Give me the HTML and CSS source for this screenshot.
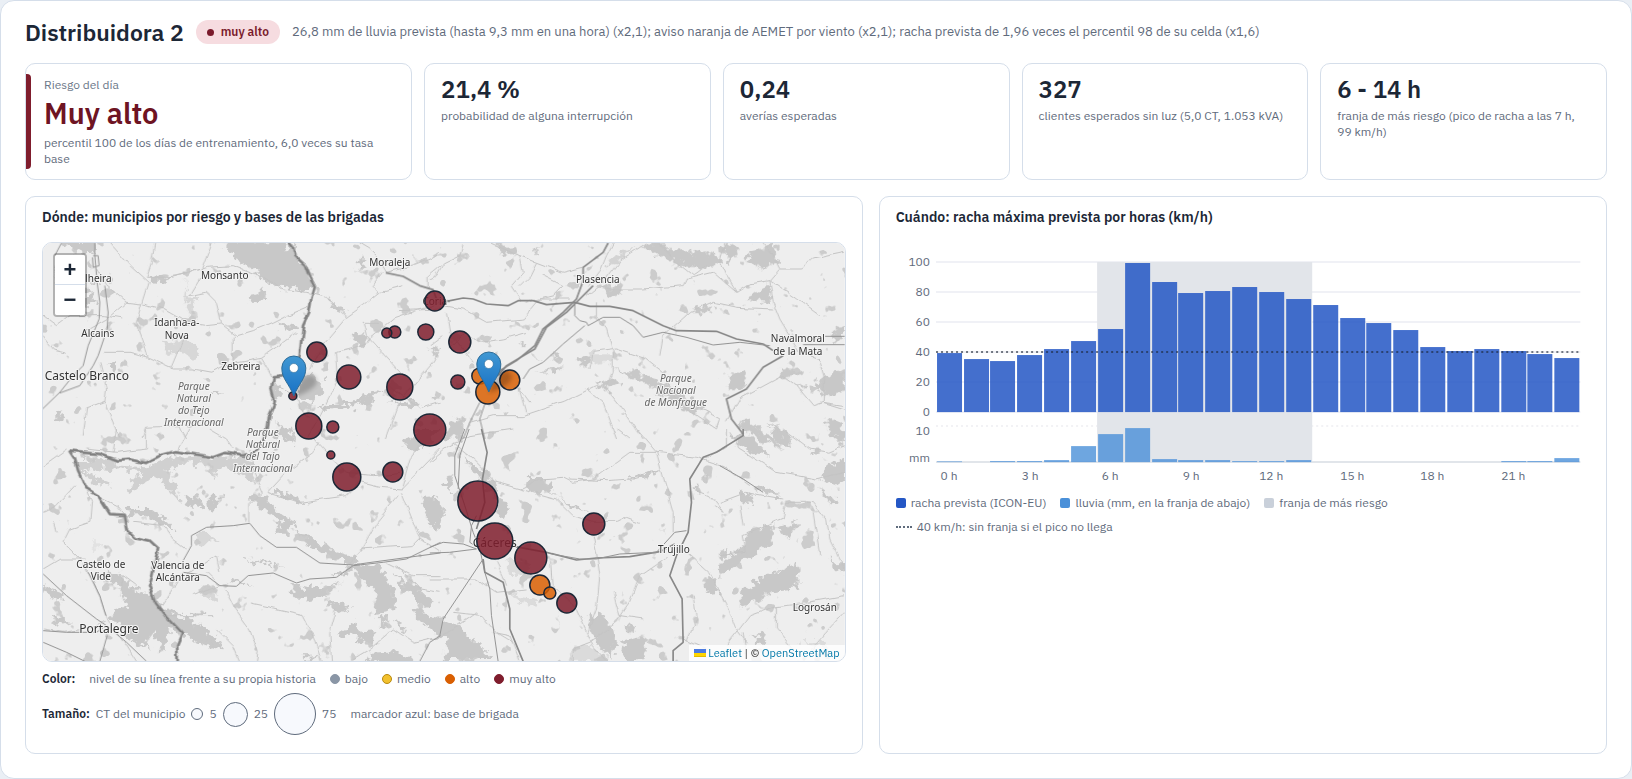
FILE: index.html
```html
<!DOCTYPE html>
<html lang="es">
<head>
<meta charset="utf-8">
<meta name="viewport" content="width=device-width, initial-scale=1">
<title>Distribuidora 2</title>
<link rel="stylesheet" href="styles.css">
</head>
<body>
<main class="sheet">
  <header class="head">
    <h1 class="title">Distribuidora 2</h1>
    <span class="pill"><i class="pill-dot"></i>muy alto</span>
    <p class="reason">26,8 mm de lluvia prevista (hasta 9,3 mm en una hora) (x2,1); aviso naranja de AEMET por viento (x2,1); racha prevista de 1,96 veces el percentil 98 de su celda (x1,6)</p>
  </header>

  <section class="kpis">
    <article class="kpi kpi-main">
      <p class="kpi-over">Riesgo del día</p>
      <p class="kpi-level">Muy alto</p>
      <p class="kpi-label">percentil 100 de los días de entrenamiento, 6,0 veces su tasa base</p>
    </article>
    <article class="kpi"><p class="kpi-value">21,4 %</p><p class="kpi-label">probabilidad de alguna interrupción</p></article>
    <article class="kpi"><p class="kpi-value">0,24</p><p class="kpi-label">averías esperadas</p></article>
    <article class="kpi"><p class="kpi-value">327</p><p class="kpi-label">clientes esperados sin luz (5,0 CT, 1.053 kVA)</p></article>
    <article class="kpi"><p class="kpi-value">6 - 14 h</p><p class="kpi-label">franja de más riesgo (pico de racha a las 7 h, 99 km/h)</p></article>
  </section>

  <section class="panels">
    <article class="panel">
      <h2 class="panel-title">Dónde: municipios por riesgo y bases de las brigadas</h2>
      <div class="map">
        <svg class="map-svg" viewBox="43 244 802 418" preserveAspectRatio="xMidYMid slice" role="img" aria-label="Mapa de municipios">
          <defs>
            <filter id="rough" x="-5%" y="-5%" width="110%" height="110%">
              <feTurbulence type="fractalNoise" baseFrequency="0.12" numOctaves="3" seed="4"/>
              <feDisplacementMap in="SourceGraphic" scale="15" xChannelSelector="R" yChannelSelector="G"/>
            </filter>
            <filter id="wiggle" x="-5%" y="-5%" width="110%" height="110%">
              <feTurbulence type="fractalNoise" baseFrequency="0.07" numOctaves="2" seed="9"/>
              <feDisplacementMap in="SourceGraphic" scale="6" xChannelSelector="R" yChannelSelector="G"/>
            </filter>
            <filter id="speckle" x="0" y="0" width="100%" height="100%" color-interpolation-filters="sRGB">
              <feTurbulence type="fractalNoise" baseFrequency="0.06" numOctaves="3" seed="21"/>
              <feColorMatrix values="0 0 0 0 .8  0 0 0 0 .8  0 0 0 0 .8  18 0 0 0 -12.2"/>
            </filter>
            <filter id="soft" x="-50%" y="-50%" width="200%" height="200%"><feGaussianBlur stdDeviation="2"/></filter>
            <linearGradient id="pinFill" x1="0" y1="0" x2="0" y2="1"><stop offset="0" stop-color="#4198d3"/><stop offset="1" stop-color="#1871c5"/></linearGradient>
            <g id="pin">
              <path d="M0-1C5-14 12-18 12-29A12 12 0 0 0-12-29C-12-18-5-14 0-1Z" fill="url(#pinFill)" stroke="#2e6c97" stroke-width="1"/>
              <circle cy="-29" r="4.5" fill="#fff" stroke="#2e6c97" stroke-width=".6"/>
            </g>
            <path id="pinShade" d="M0 0C3-10 6-17 12-21C20-25 27-17 20-10C14-5 6-2 0 0Z" fill="#000" opacity=".22" filter="url(#soft)"/>
          </defs>
          <rect x="43" y="244" width="802" height="418" fill="#eee"/>
          <rect x="43" y="244" width="802" height="418" filter="url(#speckle)"/>

          <g class="wood" filter="url(#rough)">
            <g transform="translate(20 190) scale(.3333)">
              <path d="M640 160H800L830 205 855 228 885 295 850 305 790 300 740 280 700 245 660 220 640 190 610 175Z"/>
              <path d="M125 155H220L225 195 190 190 150 180Z"/><path d="M685 335 705 310 735 312 740 330 700 345Z"/>
              <path d="M925 320 945 350 975 355 970 375 935 365Z"/><path d="M995 435 1025 430 1050 465 1030 475 1000 455Z"/>
              <path d="M195 310 215 300 225 350 195 345Z"/><path d="M200 280 250 260 240 275Z"/><path d="M265 520 290 520 285 545 270 542Z"/>
              <path d="M490 270 505 300 500 350 515 385 530 390 520 345 540 330 515 330Z" opacity=".6"/>
              <path d="M425 460 480 450 500 465 540 480 520 510 490 490 440 495Z" opacity=".6"/>
              <path d="M395 265 450 270 440 285 400 280Z"/><path d="M770 400 830 415 800 425Z"/>
              <path d="M835 575 870 555 910 570 905 610 870 640 840 625Z"/><path d="M760 570 780 600 770 640 755 640Z"/>
              <path d="M885 665 930 645 990 645 1060 610 1090 605 1060 630 1000 655 920 665Z"/>
              <path d="M1095 645 1140 640 1180 635 1200 645 1150 652Z"/><path d="M770 700 810 720 820 760 770 740Z"/>
              <path d="M575 610 600 605 605 625Z"/><path d="M100 680 130 670 120 690Z"/><path d="M1010 240 1040 220 1030 200Z"/>
            </g>
            <g transform="translate(430 190) scale(.3333)">
              <path d="M630 165 700 162 730 190 780 180 820 200 850 190 880 215 830 240 760 235 740 210 670 200Z"/>
              <path d="M870 175 900 160 930 180 900 220Z"/><path d="M960 190 1030 165 1045 220 1000 240 950 210Z"/>
              <path d="M205 172 260 168 265 190 215 195Z"/><path d="M300 185 330 180 325 192Z"/><path d="M510 290 560 290 575 310 535 318Z"/>
              <path d="M945 340 980 310 1015 280 1025 310 1030 350 985 335Z"/><path d="M785 365 830 345 840 360 860 350 850 365 800 375Z"/>
              <path d="M550 540 620 550 680 575 760 620 830 650 790 670 740 650 710 620 620 570Z"/>
              <path d="M480 490 545 490 550 520 490 525Z" opacity=".5"/><path d="M445 510 485 500 475 525 450 530Z"/>
              <path d="M500 580 550 565 575 580 545 600 510 600Z"/><path d="M310 545 400 535 375 550Z"/>
              <path d="M890 580 930 545 955 560 940 600 895 600Z"/><path d="M1045 545 1110 540 1120 560 1060 565Z"/><path d="M1095 590 1130 585 1120 600Z"/>
              <path d="M1155 580 1200 560 1245 540V610L1190 620Z"/><path d="M1205 430 1245 415V450L1210 450Z"/>
              <path d="M925 700 960 690 990 730 1040 745 1060 780 1000 760Z"/><path d="M1180 700 1240 690V770L1210 740Z"/>
              <path d="M1015 700 1060 720 1090 760 1060 750Z"/><path d="M60 700 100 680 95 750H40Z"/><path d="M540 210 620 165 570 215 530 240Z" opacity=".7"/>
              <path d="M265 460 290 460 280 475Z"/><path d="M360 500 395 500 385 515Z"/><path d="M0 470 30 490 10 500Z"/><path d="M0 615 30 625 10 635Z"/>
            </g>
            <g transform="translate(20 430) scale(.3333)">
              <path d="M165 90 230 90 300 110 380 115 440 90 520 80 600 85 690 75 710 120 700 160 650 130 600 115 575 150 555 100 480 105 440 130 470 180 480 220 440 170 400 140 340 190 320 175 370 130 290 120 240 115 195 130 280 165 270 180 220 160 170 120Z" opacity=".8"/>
              <path d="M500 205 530 195 545 230 515 240Z"/><path d="M560 210 610 205 600 240 565 245Z"/><path d="M680 210 740 190 760 230 790 260 820 280 800 320 760 320 790 290 750 250 700 220Z"/>
              <path d="M745 185 800 190 860 220 810 215Z"/><path d="M820 300 880 330 960 370 1010 385 1000 405 940 390 870 350Z"/>
              <path d="M320 240 400 240 440 270 470 300 440 300 380 260 325 265Z"/>
              <path d="M1210 205 1240 200 1262 225V300L1230 280 1210 240Z"/><path d="M1150 30 1200 0 1262 0 1220 50 1180 70Z"/>
              <path d="M260 430 310 445 340 480 395 500 440 545 520 580 600 640 615 665 560 650 490 620 455 600 430 670 400 600 370 640 400 665 340 640 290 580 270 555 320 530 300 480Z"/>
              <path d="M535 580 580 620 600 655 560 640Z"/><path d="M805 465 860 480 940 470 965 460 920 500 830 510Z"/>
              <path d="M930 440 1000 405 1080 415 1120 490 1125 540 1060 550 1070 490 1010 430Z"/><path d="M1125 440 1180 470 1240 520 1220 535 1160 490Z"/>
              <path d="M925 520 990 535 980 545 930 535Z"/><path d="M955 610 1010 580 1030 610 1080 605 1060 640 1000 630Z"/><path d="M1080 550 1110 580 1080 590Z"/>
              <path d="M1180 540 1260 570V600L1200 580Z"/><path d="M1120 570 1170 600 1150 610Z"/><path d="M620 455 650 450 690 470 640 462Z"/><path d="M520 320 560 310 600 340 530 340Z" opacity=".6"/>
              <path d="M845 685 900 680 880 697H850Z"/><path d="M1050 675 1130 670 1190 697H1040Z"/><path d="M70 470 130 490 120 515 70 490Z"/><path d="M90 570 160 575 110 590Z"/>
              <path d="M540 470 600 485 590 520 550 500Z" opacity=".6"/><path d="M670 385 720 395 790 420 720 405Z"/><path d="M500 550 560 545 540 560Z"/><path d="M220 330 240 350 225 370Z" opacity=".3"/>
            </g>
            <g transform="translate(430 430) scale(.3333)">
              <path d="M0 200 35 220 45 260 20 300 0 290Z"/><path d="M40 170 70 130 65 190Z"/><path d="M100 80 180 140 200 190 240 240 215 270 190 210 140 140Z"/>
              <path d="M280 150 340 150 370 190 320 200Z"/><path d="M380 200 440 230 470 250 430 240Z"/><path d="M300 180 400 190 300 190Z"/><path d="M595 160 640 130 690 125 650 145Z"/>
              <path d="M0 560 50 570 120 620 190 690H40L60 640 0 600Z"/><path d="M475 550 520 560 560 620 550 690 510 660 480 600Z"/><path d="M570 640 655 615 640 697H590Z"/>
              <path d="M585 590 620 585 600 620Z"/><path d="M960 310 1010 285 1035 290 1020 340 970 380 930 400 870 440 860 420 920 370Z"/><path d="M870 370 900 350 880 400Z"/>
              <path d="M940 480 1010 440 1100 400 1108 480 1020 490 980 520 930 535Z"/><path d="M825 445 860 445 870 490 830 495Z"/><path d="M1040 300 1105 280 1080 330Z"/>
              <path d="M930 180 975 210 970 235 930 220Z"/><path d="M795 160 815 190 800 200Z"/><path d="M820 145 835 140 830 165Z"/><path d="M900 20 960 20 1000 60 1030 80 960 70Z"/>
              <path d="M1020 0 1060 10 1090 50 1060 50Z"/><path d="M975 170 1060 195 1040 205 980 185Z"/><path d="M1140 65 1165 60 1155 80Z"/>
              <path d="M1165 140 1215 100 1245 90V150L1210 180Z"/><path d="M1170 170 1225 220 1205 230Z"/><path d="M1200 380 1245 410V440L1210 410Z"/><path d="M960 630 1000 610 1010 640Z"/>
              <path d="M690 310 705 290 710 320Z" opacity=".4"/><path d="M430 650 480 650 540 690 420 697Z" opacity=".5"/><path d="M235 495 330 515 300 530Z" opacity=".5"/><path d="M1110 640 1200 640 1190 660Z" opacity=".5"/><path d="M230 390 300 400 290 440 240 430Z" opacity=".5"/>
            </g>
          </g>

          <g class="lane" filter="url(#wiggle)">
            <g transform="translate(20 190) scale(.3333)">
              <path d="M270 162 330 230 385 280 365 345 320 340 260 290 230 240M405 162 395 220 380 265 430 265 500 255 560 235 640 230 720 260 790 300 860 310 920 325 980 385M575 162 545 240 450 265M370 345 430 360 500 400 560 410 605 405 650 440 700 425 760 400 800 380 870 350M365 345 350 400 375 470 385 505 330 490 250 490M385 505 460 540 520 540 575 550 640 520 725 505 790 460 830 430M605 405 600 380 590 340 560 310 510 320 540 270"/>
              <path d="M455 540 480 480 500 430M725 505 740 530 770 590 830 620 840 660 870 680M640 520 640 440M70 380 110 410 150 380 250 380 310 390M70 440 100 480 140 490M120 200 100 260 110 290M240 520 260 600 255 640 200 660 190 740M255 640 300 750M320 340 260 390 190 430M0 570 70 560M500 750 480 710 380 715 370 750"/>
              <path d="M1090 250 1060 290 1080 310 1030 350 980 385 900 480 870 540M1100 250 1070 200 1050 180 1020 162M1100 250 1180 230 1230 210 1260 190M1225 300 1225 260 1262 230M1070 310 1150 290M1135 365 1262 360M1080 400 1030 400 1040 440 1150 560M950 490 990 480 1040 460 1120 390 1262 340M950 490 955 560 930 620 900 680 860 750M1262 640 1200 660 1100 580M1262 480 1240 520 1140 640 1100 750"/>
            </g>
            <g transform="translate(430 190) scale(.3333)">
              <path d="M100 162 90 200 40 225 20 260 0 270M185 162 270 200 320 220 400 250 460 235M270 200 280 250 245 290 275 335M320 220 300 260 270 290M340 260 400 290 370 320 290 340M550 162 530 200 510 250 480 290M650 162 570 215 520 280 470 320M885 162 870 220 890 260 920 310 960 285 1020 275 1050 240 1120 240 1150 210 1245 190M1000 162 1030 200 1050 240M690 162 740 220 790 260 830 230M500 290 560 300 640 300 760 290 770 270 850 250 920 310M1020 275 1030 340 1050 390 1080 440 1110 490 1170 510 1185 560 1180 640 1245 650M1020 275 1100 330 1170 380"/>
              <path d="M500 340 500 380 530 420 550 490 550 550 530 600 570 650 640 750M40 350 100 360 170 400 280 390 330 330 420 330M50 370 60 430 130 520M60 480 110 430 150 460 220 450 290 430M480 540 490 490 560 480 650 510 700 550 740 640 860 720 870 690 780 640M690 500 700 440 780 370 850 340 920 355 1030 360M0 470 40 440M300 640 270 600 290 670M120 700 190 680 280 680 400 640 500 590M470 600 520 640 560 750M1245 660 1180 640 1150 650 1100 590 1060 560 1040 570 930 630 890 700"/>
            </g>
            <g transform="translate(20 430) scale(.3333)">
              <path d="M70 250 110 230 165 170M200 178 215 220 210 280 150 300 130 340 190 400 200 430M200 60 290 70 380 60 380 0M290 0 280 70M470 70 510 0M640 60 620 30 570 0M730 190 690 230 690 280M730 190 700 120 690 60M745 190 800 130 880 70 900 40M885 30 940 90 980 130 1060 140 1140 130M1020 160 1080 175 1145 180 1170 90 1200 50M745 190 840 220 910 210 980 200 1020 160M1145 180 1262 60M1145 190 1200 330 1260 370M1135 200 1070 280 1020 370 980 420M1020 360 1180 350 1200 330M500 360 460 330 430 290 340 280M315 260 290 230 210 190M70 420 120 390 200 390"/>
              <path d="M490 430 460 480 430 525 400 520M70 600 130 610 200 600 260 580M200 420 240 500 265 570 320 650 350 697M615 480 640 530 690 600 715 670 710 697M690 525 760 540 850 560 880 620 905 697M950 540 930 610 935 697M1100 400 1180 440 1262 440M1262 490 1200 480 1130 410M1262 620 1180 640 1120 600 1050 660 1000 690M500 440 590 380 600 430M300 500 310 440 350 470M520 500 600 470 560 430M590 600 640 650 660 697M70 110 140 60M100 280 110 310M440 560 580 560"/>
            </g>
            <g transform="translate(430 430) scale(.3333)">
              <path d="M0 100 60 50 120 20 250 0M70 40 130 90 200 160 270 180 330 150 400 145 430 160 490 150 600 70 680 70 800 85 880 110 960 170M420 150 530 155 600 150 690 125M620 0 680 70 730 250 730 310M270 180 380 210 430 260 490 280 560 280 590 265 630 280M490 320 500 370 510 440 500 540 470 620M710 385 630 440 600 520 560 580 480 640 430 660 430 697M780 375 840 430 890 520 920 600 950 640M890 650 960 560 1040 530 1130 520 1245 500M560 0 600 30M810 100 890 50 890 0M900 10 930 60 1040 130 1160 150 1245 130M1060 0 1140 60 1200 70 1245 50M1070 220 1060 270 940 320 950 370 870 380M1070 220 1150 220 1190 270 1200 330 1245 420M1150 250 1170 380"/>
              <path d="M0 450 140 450 200 490 290 480M365 400 370 470 440 540 490 650 530 697M0 630 40 620 140 550M190 610 240 620 270 697M70 550 160 560 200 610 250 640M790 180 840 200 880 250 850 230M870 220 950 190 1060 210M930 230 940 290M1040 530 1040 600 1090 660M1245 550 1200 600 1150 660M760 630 830 660M790 500 800 570 770 640M940 610 950 680M200 400 220 440 230 470M550 490 570 560 640 570"/>
            </g>
          </g>

          <g class="road">
            <g transform="translate(20 190) scale(.3333)">
              <path d="M225 162V200L232 280 240 340 238 390 205 470 190 530 160 560 120 610 68 660M255 290 265 370 262 420 235 500 220 530 180 590 120 612"/>
              <path class="road-major" d="M1098 251 1150 262 1200 290 1240 302 1250 330 1290 337"/>
              <path d="M125 162 105 200M220 200 235 200 238 230 220 235 218 205"/>
            </g>
            <g transform="translate(430 190) scale(.3333)">
              <path class="road-major" d="M535 162 520 190 460 235 460 275 440 330 400 370 340 420 315 470 260 515 210 545 190 570"/>
              <path class="road-major" d="M490 290 450 330 410 370 350 415 315 480 230 530 205 560M50 337 100 327 130 330 170 345 235 350 265 335 310 335 350 347 435 340 480 352 540 352 610 365 700 410 740 425 860 427 920 450 1000 465 1030 485M1060 500 1000 535 950 600 890 630 905 690 940 735"/>
              <path d="M435 345V380L450 395 470 400 475 410 520 385 570 385 610 410 640 445 700 430 770 445 850 468 930 460 1020 470M465 410 400 465 340 520 300 540 280 570M1120 467H1245M1185 442H1245M150 640 120 700 100 750M165 645 150 690 165 750"/>
            </g>
            <g transform="translate(20 430) scale(.3333)">
              <path d="M490 395 515 350 515 320 560 295 640 290 690 283 720 320 770 355 830 355 900 402 1000 408 1040 402 1262 372M490 430 560 440 600 470 650 472 685 440 760 432 830 462 870 450 950 445 1000 410 1090 400 1160 390 1262 340M70 435 140 500 230 570 260 590 320 640 380 697M205 430 240 500 258 560M262 620 240 697M70 605 140 610 230 610 258 590M70 640 140 670 195 697M1200 697 1230 640 1262 620"/>
            </g>
            <g transform="translate(430 430) scale(.3333)">
              <path d="M105 0 75 80 75 140 105 230 130 310 150 360 165 430 180 480 185 560 205 697M118 0 90 80 85 180M150 360 120 340 125 290 140 260M0 355 40 340 100 345 140 360M0 372 60 370 140 360"/>
              <path class="road-major" d="M155 0 172 70 158 150 165 220 140 300M160 390 165 430 220 460 240 540 240 600 280 697M240 350 350 370 440 393 500 387 600 383 690 368 735 345M940 0 940 20 860 70 820 85 780 150 785 220 775 310 740 380 720 440 757 510 760 640 730 665V697"/>
              <path d="M365 375 450 390 500 390 570 375 680 370 735 310 770 305M160 390 100 480 40 570 30 620M870 110 940 150 1000 190"/>
            </g>
          </g>

          <g class="frontier" filter="url(#wiggle)">
            <path id="frontier" transform="translate(20 190) scale(.3333)" d="M800 150 822 178 830 205 855 228 868 262 885 295 875 325 868 370 850 410 845 450 840 500 830 545 790 562 762 565 755 600 765 640 748 680 742 730 728 765 705 788 670 800 615 792 580 805 520 795 465 787 425 798 378 822 335 812 295 815 240 795 150 788 165 810 175 845 200 898 235 920 270 975 312 978 320 1020 345 1045 390 1055 415 1078 405 1120 395 1170 388 1190 405 1240 440 1285 487 1335 472 1370 474 1425"/>
            <use href="#frontier" class="frontier-core"/>
          </g>

          <g class="place">
            <text x="90" y="283">Soalheira</text><text x="225" y="280">Monsanto</text><text x="390" y="267">Moraleja</text>
            <text x="177" y="327">Idanha-a-</text><text x="177" y="340">Nova</text><text x="98" y="338">Alcains</text><text x="241" y="371">Zebreira</text>
            <text class="place-big" x="87" y="381">Castelo Branco</text><text x="598" y="284">Plasencia</text><text x="435" y="306">Coria</text>
            <text x="798" y="343">Navalmoral</text><text x="798" y="356">de la Mata</text>
            <text x="101" y="569">Castelo de</text><text x="101" y="581">Vide</text><text x="178" y="570">Valencia de</text><text x="178" y="582">Alcántara</text>
            <text class="place-big" x="109" y="634">Portalegre</text><text class="place-big" x="495" y="548">Cáceres</text><text x="674" y="554">Trujillo</text><text x="815" y="612">Logrosán</text>
            <g class="place-park">
              <text x="194" y="391">Parque</text><text x="194" y="403">Natural</text><text x="194" y="415">do Tejo</text><text x="194" y="427">Internacional</text>
              <text x="263" y="437">Parque</text><text x="263" y="449">Natural</text><text x="263" y="461">del Tajo</text><text x="263" y="473">Internacional</text>
              <text x="676" y="383">Parque</text><text x="676" y="395">Nacional</text><text x="676" y="407">de Monfrague</text>
            </g>
          </g>

          <g class="town">
            <circle cx="435" cy="302" r="10"/><circle cx="395" cy="333" r="6"/><circle cx="387" cy="334" r="5"/><circle cx="426" cy="333" r="8"/>
            <circle cx="317" cy="353" r="10"/><circle cx="349" cy="378" r="12"/><circle cx="400" cy="388" r="13"/><circle cx="293" cy="397" r="4"/>
            <circle cx="309" cy="427" r="13"/><circle cx="333" cy="428" r="6"/><circle cx="430" cy="431" r="16"/><circle cx="331" cy="456" r="4"/>
            <circle cx="347" cy="478" r="14"/><circle cx="393" cy="473" r="10"/><circle cx="460" cy="343" r="11"/><circle cx="458" cy="383" r="7"/>
            <circle cx="478" cy="502" r="20"/><circle cx="495" cy="542" r="18"/><circle cx="531" cy="559" r="16"/><circle cx="594" cy="525" r="11"/><circle cx="567" cy="604" r="10"/>
            <g class="town-high"><circle cx="480" cy="377" r="8"/><circle cx="510" cy="381" r="10"/><circle cx="488" cy="393" r="12"/><circle cx="540" cy="586" r="10"/><circle cx="550" cy="594" r="6"/></g>
          </g>
          <use href="#pinShade" x="294" y="398"/><use href="#pinShade" x="489" y="394"/>
          <use href="#pin" x="294" y="398"/><use href="#pin" x="489" y="394"/>
        </svg>
        <div class="zoom"><button type="button" aria-label="Acercar">+</button><button type="button" aria-label="Alejar">−</button></div>
        <div class="credit"><svg width="12" height="8" viewBox="0 0 12 8" aria-hidden="true"><path fill="#4c7be1" d="M0 0h12v4H0z"/><path fill="#ffd500" d="M0 4h12v3H0z"/><path fill="#e0bc00" d="M0 7h12v1H0z"/></svg> <a href="#leaflet">Leaflet</a> | © <a href="#osm">OpenStreetMap</a></div>
      </div>
      <div class="legend legend-color">
        <strong>Color:</strong><span>nivel de su línea frente a su propia historia</span>
        <span class="key"><i class="dot dot-low"></i>bajo</span><span class="key"><i class="dot dot-mid"></i>medio</span><span class="key"><i class="dot dot-high"></i>alto</span><span class="key"><i class="dot dot-top"></i>muy alto</span>
      </div>
      <div class="legend legend-size">
        <strong>Tamaño:</strong><span>CT del municipio</span><i class="ring ring-s"></i><span>5</span><i class="ring ring-m"></i><span>25</span><i class="ring ring-l"></i><span>75</span><span class="base-note">marcador azul: base de brigada</span>
      </div>
    </article>

    <article class="panel">
      <h2 class="panel-title">Cuándo: racha máxima prevista por horas (km/h)</h2>
      <svg class="chart" viewBox="0 0 694 245" role="img" aria-label="Racha y lluvia por horas">
        <path class="grid" d="M40 20H684M40 50H684M40 80H684M40 110H684M40 140H684M40 170H684"/>
        <path class="grid grid-dots" d="M40 184H684"/><path class="axis" d="M40 220H684"/>
        <rect class="band" x="201" y="20" width="215" height="200"/>
        <g class="gust">
          <rect x="41" y="111" width="25" height="59"/><rect x="68" y="117" width="25" height="53"/><rect x="94" y="119" width="25" height="51"/><rect x="121" y="113" width="25" height="57"/><rect x="148" y="107" width="25" height="63"/><rect x="175" y="99" width="25" height="71"/><rect x="202" y="87" width="25" height="83"/><rect x="229" y="21" width="25" height="149"/><rect x="256" y="40" width="25" height="130"/><rect x="282" y="51" width="25" height="119"/><rect x="309" y="49" width="25" height="121"/><rect x="336" y="45" width="25" height="125"/><rect x="363" y="50" width="25" height="120"/><rect x="390" y="57" width="25" height="113"/><rect x="417" y="63" width="25" height="107"/><rect x="444" y="76" width="25" height="94"/><rect x="470" y="81" width="25" height="89"/><rect x="497" y="88" width="25" height="82"/><rect x="524" y="105" width="25" height="65"/><rect x="551" y="109" width="25" height="61"/><rect x="578" y="107" width="25" height="63"/><rect x="605" y="109" width="25" height="61"/><rect x="631" y="112" width="25" height="58"/><rect x="658" y="116" width="25" height="54"/>
        </g>
        <g class="rain">
          <rect x="41" y="219.3" width="25" height=".7"/><rect x="94" y="219" width="25" height="1"/><rect x="121" y="219" width="25" height="1"/><rect x="148" y="218" width="25" height="2"/><rect x="175" y="204" width="25" height="16"/><rect x="202" y="192" width="25" height="28"/><rect x="229" y="186" width="25" height="34"/><rect x="256" y="217" width="25" height="3"/><rect x="282" y="218" width="25" height="2"/><rect x="309" y="218" width="25" height="2"/><rect x="336" y="219" width="25" height="1"/><rect x="363" y="219" width="25" height="1"/><rect x="390" y="218" width="25" height="2"/><rect x="605" y="219" width="25" height="1"/><rect x="631" y="219" width="25" height="1"/><rect x="658" y="216" width="25" height="4"/>
        </g>
        <path class="limit" d="M40 110H684"/>
        <g class="tick tick-y"><text x="34" y="24">100</text><text x="34" y="54">80</text><text x="34" y="84">60</text><text x="34" y="114">40</text><text x="34" y="144">20</text><text x="34" y="174">0</text><text x="34" y="193">10</text><text x="34" y="220">mm</text></g>
        <g class="tick"><text x="53" y="238">0 h</text><text x="134" y="238">3 h</text><text x="214" y="238">6 h</text><text x="295" y="238">9 h</text><text x="375" y="238">12 h</text><text x="456" y="238">15 h</text><text x="536" y="238">18 h</text><text x="617" y="238">21 h</text></g>
      </svg>
      <div class="legend legend-chart">
        <span class="key"><i class="swatch swatch-gust"></i>racha prevista (ICON-EU)</span><span class="key"><i class="swatch swatch-rain"></i>lluvia (mm, en la franja de abajo)</span><span class="key"><i class="swatch swatch-band"></i>franja de más riesgo</span><span class="key"><i class="dash"></i>40 km/h: sin franja si el pico no llega</span>
      </div>
    </article>
  </section>
</main>
</body>
</html>
```
FILE: styles.css
```css
* { box-sizing: border-box; }
body { margin: 0; background: #eaeff5; color: #1c2736; font: 12px/16px "IBM Plex Sans", Roboto, "Liberation Sans", sans-serif; }
h1, h2, p { margin: 0; }
.sheet { display: flex; flex-direction: column; gap: 16px; min-height: 100vh; padding: 16px 24px 24px; background: #fff; border: 1px solid #d5deea; border-radius: 14px; }
.head { display: flex; align-items: center; gap: 12px; min-height: 30px; }
.title { font-size: 23px; line-height: 30px; font-weight: 600; white-space: nowrap; }
.pill { display: flex; align-items: center; gap: 7px; height: 24px; padding: 0 11px; border-radius: 12px; background: #f6dce0; color: #7a1a2b; font-weight: 600; white-space: nowrap; }
.pill-dot { width: 7px; height: 7px; border-radius: 50%; background: #7a1a2b; }
.reason { color: #5f6b7c; font-size: 13px; line-height: 18px; }

.kpis { display: grid; grid-template-columns: 1.35fr repeat(4, 1fr); gap: 12px; }
.kpi { padding: 12px 16px; border: 1px solid #d5deea; border-radius: 10px; }
.kpi-main { position: relative; padding: 12px 18px; }
.kpi-main::before { content: ""; position: absolute; left: 0; top: 10px; bottom: 10px; width: 5px; border-radius: 0 4px 4px 0; background: #7f1d2d; }
.kpi-over { color: #6c7889; line-height: 18px; }
.kpi-level { margin: 1px 0 4px; color: #6e1423; font-size: 29px; line-height: 36px; font-weight: 600; }
.kpi-value { margin-bottom: 6px; font-size: 24px; line-height: 26px; font-weight: 600; }
.kpi-label { color: #5f6b7c; }

.panels { flex: 1; display: grid; grid-template-columns: 1.15fr 1fr; gap: 16px; }
.panel { padding: 12px 16px; border: 1px solid #d5deea; border-radius: 10px; min-width: 0; }
.panel-title { margin-bottom: 17px; font-size: 14px; line-height: 16px; font-weight: 600; }

.map { position: relative; height: 420px; overflow: hidden; border: 1px solid #d5deea; border-radius: 10px; }
.map-svg { display: block; width: 100%; height: 100%; }
.wood { fill: #c8c8c8; }
.lane { fill: none; stroke: #c4c4c4; stroke-width: 3; stroke-linejoin: round; }
.road { fill: none; stroke: #949494; stroke-width: 3; stroke-linejoin: round; }
.road-major { stroke: #888; stroke-width: 5; }
.frontier { fill: none; stroke: #a8a8a8; stroke-width: 10; stroke-linejoin: round; }
.frontier-core { stroke: #808080; stroke-width: 5; }
.place { font: 10px "Noto Sans", sans-serif; fill: #333; text-anchor: middle; stroke: #f4f4f4; stroke-width: 2px; paint-order: stroke; stroke-linejoin: round; }
.place-big { font-size: 12px; }
.place-park { font-style: italic; fill: #666; }
.town { fill: #7f1d2d; fill-opacity: .85; stroke: #1c2736; stroke-width: 1.5; }
.town-high { fill: #d95f02; }

.zoom { position: absolute; left: 10px; top: 10px; border: 2px solid rgba(0, 0, 0, .25); border-radius: 4px; background-clip: padding-box; }
.zoom button { display: block; width: 30px; height: 30px; padding: 0; border: 0; border-radius: 0 0 2px 2px; background: #fff; color: #1c2736; font: bold 22px/30px "Liberation Sans", sans-serif; }
.zoom button:first-child { border-bottom: 1px solid #d5deea; border-radius: 2px 2px 0 0; }
.credit { position: absolute; right: 0; bottom: 0; padding: 0 5px; background: rgba(255, 255, 255, .8); color: #333; font-size: 11px; }
.credit a { color: #0078a8; text-decoration: none; }

.legend { display: flex; flex-wrap: wrap; align-items: center; color: #5f6b7c; }
.legend strong { color: #1c2736; font-weight: 600; }
.legend-color { gap: 14px; margin-top: 8px; line-height: 18px; }
.key { display: flex; align-items: center; gap: 5px; }
.dot { width: 10px; height: 10px; border-radius: 50%; border: 1px solid; }
.dot-low { background: #8a96a6; border-color: #8a96a6; }
.dot-mid { background: #f2c12e; border-color: #b8890f; }
.dot-high { background: #d95f02; border-color: #d95f02; }
.dot-top { background: #7f1d2d; border-color: #7f1d2d; }
.legend-size { gap: 6px; margin-top: 5px; }
.ring { border: 1px solid #5f6b7c; border-radius: 50%; background: #f7f9fd; }
.ring-s { width: 12px; height: 12px; }
.ring-m { width: 25px; height: 25px; }
.ring-l { width: 42px; height: 42px; }
.base-note { margin-left: 8px; }

.chart { display: block; width: 100%; height: auto; }
.grid { fill: none; stroke: #f0f1f6; stroke-width: 2; }
.grid-dots { stroke-dasharray: 2 3; stroke: #f2f2f5; }
.axis { stroke: #e1e5ea; stroke-width: 2; }
.band { fill: #e2e5ea; }
.gust { fill: #2457c5; opacity: .85; }
.rain { fill: #4a90d9; opacity: .8; }
.limit { fill: none; stroke: #1c2736; stroke-opacity: .6; stroke-width: 2; stroke-dasharray: 2 3; }
.tick { fill: #5f6b7c; font-size: 12px; text-anchor: middle; }
.tick-y { text-anchor: end; }
.legend-chart { gap: 8px 14px; margin-top: 8px; }
.swatch { width: 10px; height: 10px; border-radius: 2px; }
.swatch-gust { background: #2457c5; }
.swatch-rain { background: #4a90d9; }
.swatch-band { background: #c9d0da; }
.dash { width: 16px; border-top: 2px dotted #5f6b7c; }
```
